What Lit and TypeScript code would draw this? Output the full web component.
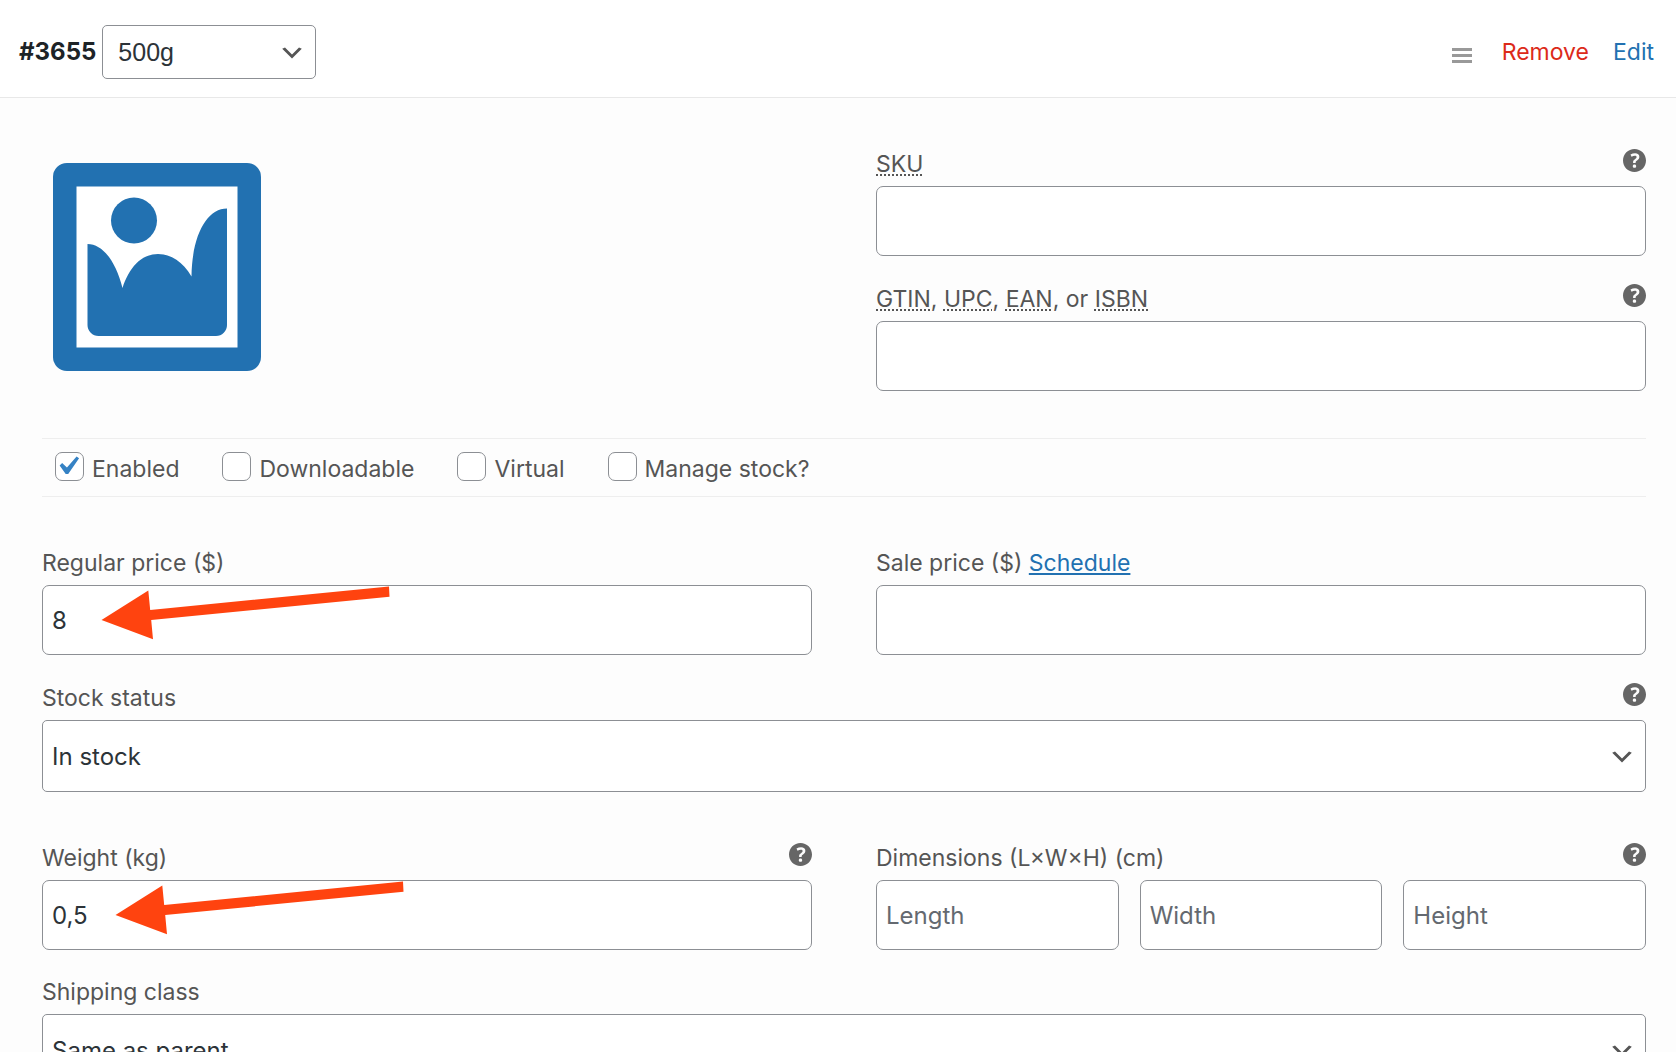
import { css, html, LitElement, svg } from 'lit';
import { customElement, property } from 'lit/decorators.js';

// Icons
// -----------------------------------------------------------------------------
const chevron = html`<svg class="chevron" viewBox="0 0 20 20" aria-hidden="true">
  <path d="M5 6l5 5 5-5 2 1-7 7-7-7 2-1z" />
</svg>`;

const imageIcon = html`<svg class="image-icon" viewBox="0 0 208 208" aria-hidden="true">
  <rect width="208" height="208" rx="14" fill="#2271b1" />
  <rect x="23.5" y="23.5" width="161" height="161" fill="#fff" />
  <circle cx="81" cy="57.5" r="23" fill="#2271b1" />
  <path
    fill="#2271b1"
    d="M34.5 81C50 81 63 99 69.5 125C76 105 88 91 105 91C118 91 130 99 138.5 113.5C139 72 154 45.5 174 45.5V162a11 11 0 0 1-11 11H45.5a11 11 0 0 1-11-11z"
  />
</svg>`;

const helpPath = svg`<path d="M17 10c0-3.87-3.14-7-7-7-3.87 0-7 3.13-7 7s3.13 7 7 7c3.86 0 7-3.13 7-7zm-6.3 1.48H9.14v-.43c0-.38.08-.7.24-.98s.46-.57.88-.89c.41-.29.68-.53.81-.71.14-.18.2-.39.2-.62 0-.25-.09-.44-.28-.58-.19-.13-.45-.19-.79-.19-.58 0-1.25.19-2 .57l-.64-1.28c.87-.49 1.8-.74 2.77-.74.81 0 1.45.2 1.92.58.48.39.71.91.71 1.55 0 .43-.09.8-.29 1.11-.19.32-.57.67-1.11 1.06-.38.28-.61.49-.71.63-.1.15-.15.34-.15.57v.35zm-1.47 2.74c-.18-.17-.27-.42-.27-.73 0-.33.08-.58.26-.75s.43-.25.77-.25c.32 0 .57.09.75.26s.27.42.27.74c0 .3-.09.55-.27.72-.18.18-.43.27-.75.27-.33 0-.58-.09-.76-.26z" />`;

// Help tip component
// -----------------------------------------------------------------------------
@customElement('help-tip')
export class HelpTip extends LitElement {
    static override styles = css`
    :host {
      display: block;
    }
    .tip {
      display: block;
      padding: 0;
      border: none;
      background: none;
      cursor: help;
    }
    svg {
      display: block;
      width: 23px;
      height: 23px;
      fill: #666;
    }
  `;

    @property({ type: String }) label = 'Help';

    override render() {
        return html`<button class="tip" type="button" aria-label=${this.label}>
      <svg viewBox="3 3 14 14" aria-hidden="true">${helpPath}</svg>
    </button>`;
    }
}

// Callout arrow component
// -----------------------------------------------------------------------------
@customElement('callout-arrow')
export class CalloutArrow extends LitElement {
    static override styles = css`
    :host {
      display: block;
      pointer-events: none;
    }
    svg {
      display: block;
      width: 289px;
      height: 56px;
      fill: #ff430f;
    }
  `;

    override render() {
        return html`<svg viewBox="0 0 289 56" aria-hidden="true">
      <path d="M.5 35L47.3 5.5L49.2 25L288 1.5L288.5 11.8L50.2 35L52 54.2z" />
    </svg>`;
    }
}

// Variation editor
// -----------------------------------------------------------------------------
@customElement('app-root')
export class AppRoot extends LitElement {
    static override styles = css`
    :host {
      display: block;
      height: 100vh;
      overflow-y: auto;
      scrollbar-width: none;
      background: #fdfdfd;
      color: #555;
      font-family: Inter, sans-serif;
      font-size: 23px;
    }
    * {
      box-sizing: border-box;
    }
    .header {
      display: flex;
      align-items: center;
      gap: 6px;
      padding: 25px 22px 18px 19px;
      background: #fff;
      border-bottom: 1px solid #e8e8e8;
    }
    .variation-id {
      color: #1d2327;
      font-size: 24px;
      line-height: 52px;
    }
    .actions {
      display: flex;
      align-items: center;
      gap: 24px;
      margin-left: auto;
    }
    .drag {
      display: grid;
      gap: 3px;
      padding: 0;
      margin: 6px 6px 0 0;
      border: none;
      background: none;
      cursor: move;
    }
    .drag span {
      width: 20px;
      height: 3px;
      background: #999;
    }
    .actions a {
      color: #2271b1;
      text-decoration: none;
    }
    .actions .remove {
      color: #dc2a19;
    }
    .content {
      padding: 44px 30px 44px 42px;
    }
    .columns {
      display: grid;
      grid-template-columns: 1fr 1fr;
      gap: 64px;
    }
    .stack {
      display: grid;
      gap: 21px;
    }
    .upload {
      justify-self: start;
      align-self: start;
      margin: 21px 0 0 11px;
      padding: 0;
      border: none;
      background: none;
      cursor: pointer;
    }
    .image-icon {
      display: block;
      width: 208px;
      height: 208px;
    }
    .field-head {
      display: flex;
      justify-content: space-between;
      line-height: 44px;
    }
    .field-head help-tip {
      margin-top: 7px;
    }
    .field-head a {
      color: #2271b1;
      text-underline-offset: 2px;
      text-decoration-thickness: 2px;
    }
    abbr {
      text-decoration: underline dotted 2px;
      text-underline-offset: 2px;
    }
    .control {
      position: relative;
    }
    .control callout-arrow {
      position: absolute;
      top: 0;
      left: 59px;
    }
    .control .after-decimal {
      left: 73px;
    }
    .input,
    .select {
      display: block;
      width: 100%;
      height: 70px;
      margin: 0;
      padding: 0 9px;
      border: 1px solid #8c8f94;
      border-radius: 7px;
      background: #fff;
      color: #2c3338;
      font: 24px Inter, sans-serif;
    }
    .input::placeholder {
      color: #646970;
      opacity: 1;
    }
    .select {
      height: 72px;
      padding-right: 48px;
      border-radius: 5px;
      appearance: none;
    }
    .select.compact {
      width: 214px;
      height: 54px;
      padding-left: 15px;
      font-family: 'Liberation Sans', sans-serif;
      font-size: 25px;
    }
    .chevron {
      position: absolute;
      top: calc(50% - 13px);
      right: 10px;
      width: 28px;
      height: 28px;
      fill: #555;
      pointer-events: none;
    }
    .options {
      display: flex;
      gap: 43px;
      margin: 47px 0 44px;
      padding: 13px 13px 10px;
      border-top: 1px solid #eee;
      border-bottom: 1px solid #eee;
    }
    .option {
      display: flex;
      gap: 8px;
      line-height: 34px;
    }
    .box {
      display: grid;
      width: 29px;
      height: 29px;
    }
    .box input,
    .box svg {
      grid-area: 1 / 1;
      width: 29px;
      height: 29px;
      margin: 0;
    }
    .box input {
      appearance: none;
      border: 1px solid #8c8f94;
      border-radius: 7px;
      background: #fff;
    }
    .box svg {
      visibility: hidden;
      fill: #3582c4;
      pointer-events: none;
    }
    .box input:checked + svg {
      visibility: visible;
    }
    .pricing {
      margin-bottom: 21px;
    }
    .shipping {
      margin: 44px 0 20px;
    }
    .dimensions {
      display: grid;
      grid-template-columns: repeat(3, 1fr);
      gap: 21px;
    }
  `;

    private options = [
        { id: 'enabled', label: 'Enabled', checked: true },
        { id: 'downloadable', label: 'Downloadable', checked: false },
        { id: 'virtual', label: 'Virtual', checked: false },
        { id: 'manage-stock', label: 'Manage stock?', checked: false },
    ];

    private renderOption(option: { id: string; label: string; checked: boolean }) {
        return html`<label class="option" for=${option.id}>
      <span class="box">
        <input id=${option.id} type="checkbox" .checked=${option.checked} />
        <svg viewBox="3.3 2.5 15.5 15.5" aria-hidden="true">
          <path d="M14.83 4.89l1.34.94-5.81 8.38H9.02L5.78 9.67l1.34-1.25 2.57 2.4z" />
        </svg>
      </span>
      ${option.label}
    </label>`;
    }

    override render() {
        return html`
      <header class="header">
        <strong class="variation-id">#3655</strong>
        <div class="control">
          <select class="select compact" aria-label="Variation size">
            <option>500g</option>
          </select>
          ${chevron}
        </div>
        <div class="actions">
          <button class="drag" type="button" aria-label="Drag to reorder">
            <span></span><span></span><span></span>
          </button>
          <a class="remove" href="#remove">Remove</a>
          <a href="#edit">Edit</a>
        </div>
      </header>

      <main class="content">
        <div class="columns">
          <button class="upload" type="button" aria-label="Upload an image">${imageIcon}</button>
          <div class="stack">
            <div class="field">
              <div class="field-head">
                <label for="sku"><abbr title="Stock Keeping Unit">SKU</abbr></label>
                <help-tip label="About SKU"></help-tip>
              </div>
              <input class="input" id="sku" type="text" />
            </div>
            <div class="field">
              <div class="field-head">
                <label for="gtin"
                  ><abbr title="Global Trade Item Number">GTIN</abbr>,
                  <abbr title="Universal Product Code">UPC</abbr>,
                  <abbr title="European Article Number">EAN</abbr>, or
                  <abbr title="International Standard Book Number">ISBN</abbr></label
                >
                <help-tip label="About product identifiers"></help-tip>
              </div>
              <input class="input" id="gtin" type="text" />
            </div>
          </div>
        </div>

        <div class="options">${this.options.map((option) => this.renderOption(option))}</div>

        <div class="columns pricing">
          <div class="field">
            <div class="field-head"><label for="regular-price">Regular price ($)</label></div>
            <div class="control">
              <input class="input" id="regular-price" type="text" value="8" />
              <callout-arrow></callout-arrow>
            </div>
          </div>
          <div class="field">
            <div class="field-head">
              <span><label for="sale-price">Sale price ($)</label> <a href="#schedule">Schedule</a></span>
            </div>
            <input class="input" id="sale-price" type="text" />
          </div>
        </div>

        <div class="field">
          <div class="field-head">
            <label for="stock-status">Stock status</label>
            <help-tip label="About stock status"></help-tip>
          </div>
          <div class="control">
            <select class="select" id="stock-status">
              <option>In stock</option>
            </select>
            ${chevron}
          </div>
        </div>

        <div class="columns shipping">
          <div class="field">
            <div class="field-head">
              <label for="weight">Weight (kg)</label>
              <help-tip label="About weight"></help-tip>
            </div>
            <div class="control">
              <input class="input" id="weight" type="text" value="0,5" />
              <callout-arrow class="after-decimal"></callout-arrow>
            </div>
          </div>
          <div class="field">
            <div class="field-head">
              <label for="length">Dimensions (L×W×H) (cm)</label>
              <help-tip label="About dimensions"></help-tip>
            </div>
            <div class="dimensions">
              <input class="input" id="length" type="text" placeholder="Length" />
              <input class="input" type="text" placeholder="Width" aria-label="Width" />
              <input class="input" type="text" placeholder="Height" aria-label="Height" />
            </div>
          </div>
        </div>

        <div class="field">
          <div class="field-head"><label for="shipping-class">Shipping class</label></div>
          <div class="control">
            <select class="select" id="shipping-class">
              <option>Same as parent</option>
            </select>
            ${chevron}
          </div>
        </div>
      </main>
    `;
    }
}
